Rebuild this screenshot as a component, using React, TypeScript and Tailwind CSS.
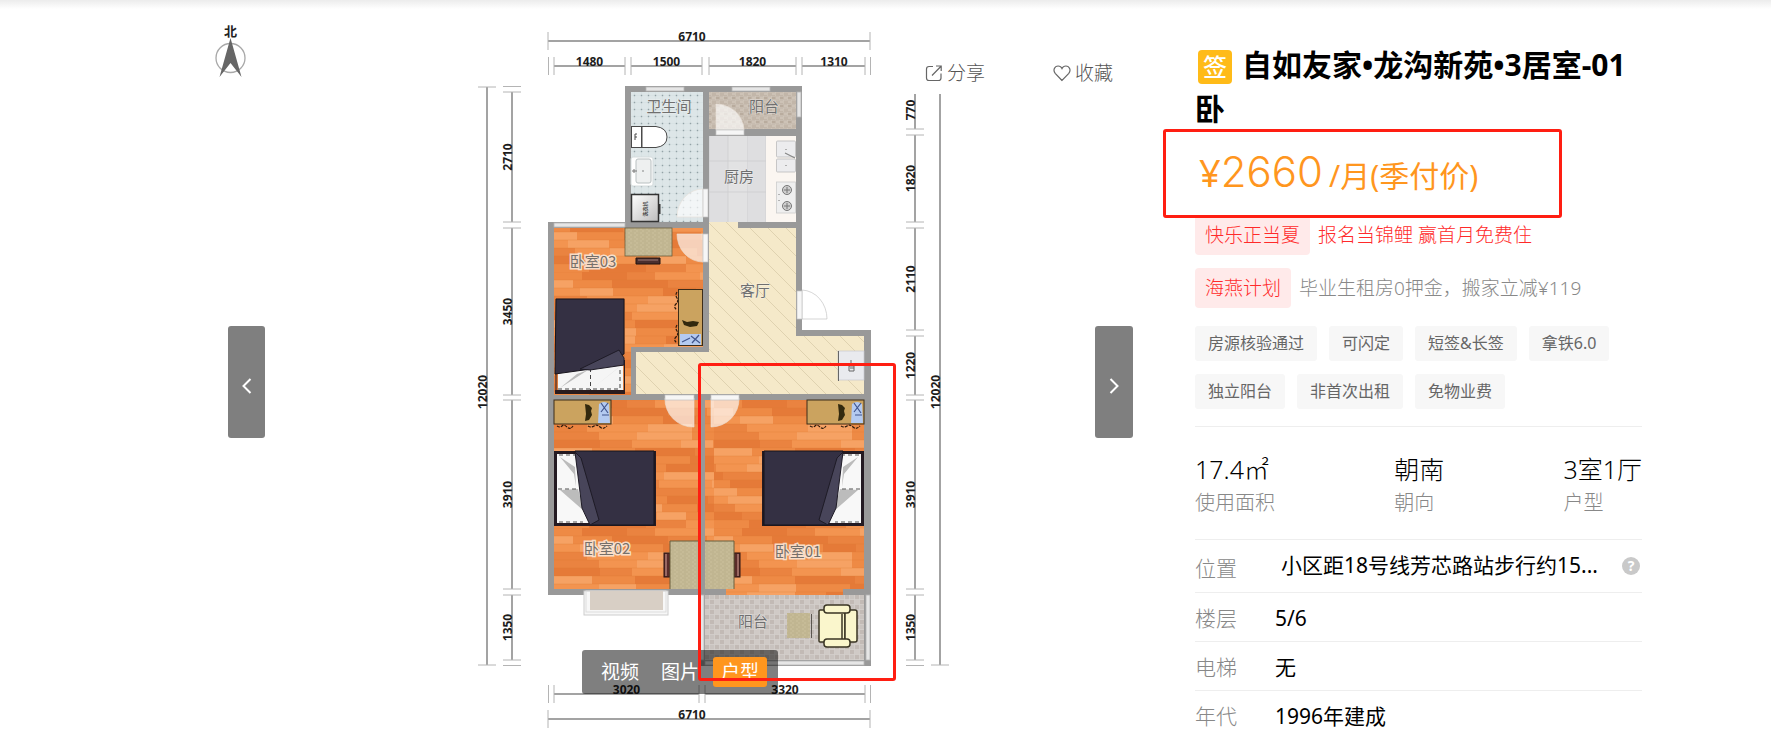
import React from "react";

const WOOD = ["#ee8a45", "#f39450", "#e57a38", "#f6a264", "#ea8340"];

const tags = ["房源核验通过", "可闪定", "短签&长签", "拿铁6.0", "独立阳台", "非首次出租", "免物业费"];

const stats = [
  { value: "17.4㎡", label: "使用面积" },
  { value: "朝南", label: "朝向" },
  { value: "3室1厅", label: "户型" },
];

const DIM_FONT = "font-['Noto_Sans','Noto_Sans_CJK_SC',sans-serif] font-bold text-[12px]";

type DimProps = { from: number; to: number; at: number; label: string; labelAt?: number; ticks?: boolean };

function HDim({ from, to, at, label, labelAt }: DimProps) {
  return (
    <g>
      <path d={`M${from} ${at}H${to}`} stroke="#858585" strokeWidth="1.5" />
      <path d={`M${from} ${at - 9}v18M${to} ${at - 9}v18`} stroke="#b4b4b4" />
      <text x={labelAt ?? (from + to) / 2} y={at} textAnchor="middle" fill="#1c1c1c" className={DIM_FONT}>
        {label}
      </text>
    </g>
  );
}

function VDim({ from, to, at, label, labelAt, ticks = true }: DimProps) {
  const mid = labelAt ?? (from + to) / 2;
  return (
    <g>
      <path d={`M${at} ${from}V${to}`} stroke="#858585" strokeWidth="1.5" />
      <path d={`${ticks ? `M${at - 9} ${from}h18` : ""}M${at - 9} ${to}h18`} stroke="#b4b4b4" />
      <text
        transform={`translate(${at} ${mid}) rotate(-90)`}
        textAnchor="middle"
        fill="#1c1c1c"
        className={DIM_FONT}
      >
        {label}
      </text>
    </g>
  );
}

function RoomName({ x, y, children, halo }: { x: number; y: number; children: string; halo?: boolean }) {
  return (
    <text
      x={x}
      y={y}
      textAnchor="middle"
      fill={halo ? "#76706a" : "#6f6f6f"}
      stroke={halo ? "#fbf3ea" : "#f6f6f6"}
      strokeWidth={halo ? 3 : 1}
      strokeOpacity={halo ? 0.8 : 0.6}
      paintOrder="stroke"
      className="font-['Noto_Sans_CJK_SC',sans-serif] text-[15px]"
    >
      {children}
    </text>
  );
}

function Dresser() {
  return (
    <g>
      <path d="M3 26q3 2 5 0t5 1 6-1M34 26q3 2 6 0t6 1 7-1" fill="none" stroke="#2d1a0c" strokeWidth="1.2" strokeDasharray="3 1" />
      <rect width="57" height="24" fill="#cba35f" stroke="#3d2c18" />
      <path d="M31 4l4 1 3 3-1 3 1 4-3 5-4 1 1-7z" fill="#33290e" />
      <path d="M45 4q5-4 10 0l1 19H44z" fill="#b4caf0" />
      <path d="M47 3l7 10M54 3l-7 9M48 15h7" stroke="#41558c" strokeWidth="1.2" fill="none" />
    </g>
  );
}

function Bed() {
  return (
    <g>
      <rect width="102" height="75" fill="#241a22" />
      <rect x="3" y="3" width="34" height="69" fill="#f8f8f8" />
      <path d="M6 6l14 17 2 13-1-20zM6 39l24 21-6-22z" fill="#bcbcbc" />
      <path d="M5 4h16M4 38h18M5 71h24" stroke="#555" strokeWidth="1" strokeDasharray="4 3" fill="none" />
      <path d="M21 0H100V74H36z" fill="#343043" stroke="#17141c" />
      <path d="M21 1l6 6 18 62-9 5-8-17z" fill="#48455a" stroke="#1e1b26" />
    </g>
  );
}

function WorkDesk() {
  return (
    <g>
      <rect x="-6" y="12" width="6" height="24" fill="#5a2c2a" stroke="#2b1412" />
      <path d="M-4 13v22" stroke="#d9a59a" strokeWidth="1" />
      <rect width="29" height="48" fill="url(#desk)" />
      <path d="M0 48V0h29" fill="none" stroke="#6b5f3d" />
    </g>
  );
}

function FloorPlan() {
  const planks: React.ReactNode[] = [];
  for (let row = 0; row < 16; row++) {
    let x = -((row * 37) % 50);
    let i = row * 3;
    while (x < 160) {
      const w = 28 + ((i * 17 + row * 11) % 34);
      planks.push(
        <rect key={`${row}-${x}`} x={x} y={row * 8} width={w} height="8" fill={WOOD[(i * 7 + row * 2) % 5]} />
      );
      x += w;
      i++;
    }
    planks.push(<path key={`l${row}`} d={`M0 ${row * 8}h160`} stroke="#d9752f" strokeWidth="0.6" opacity="0.5" />);
  }
  const glass = "#e6e6e6";
  return (
    <svg viewBox="200 0 933 733" className="block h-auto w-full" role="img" aria-label="户型图">
      <defs>
        <pattern id="wood" x="554" y="400" width="160" height="128" patternUnits="userSpaceOnUse">
          {planks}
        </pattern>
        <pattern id="dots" x="631" y="92" width="7" height="7" patternUnits="userSpaceOnUse">
          <rect width="7" height="7" fill="#dde6e8" />
          <path d="M0 3.500h7M3.500 0v7" stroke="#d2dee0" strokeWidth="0.500" />
          <rect x="2.800" y="2.800" width="1.400" height="1.400" fill="#93a2a7" />
        </pattern>
        <pattern id="mosaic" width="8" height="8" patternUnits="userSpaceOnUse">
          <rect width="8" height="8" fill="#c2b6a9" />
          <path d="M0 1h3v2H0zM4 5h3v2H4z" fill="#cdc2b6" />
          <path d="M4 1h3v2H4z" fill="#b9ac9e" />
          <path d="M0 4h8M0 0h8M3.500 0v4M7.500 4v4" stroke="#d3c9bd" strokeWidth="0.600" />
        </pattern>
        <pattern id="stone" width="10" height="10" patternUnits="userSpaceOnUse">
          <rect width="10" height="10" fill="#c9c3bf" />
          <path d="M0 0h4v4H0zM5 5h4v4H5z" fill="#c2bab5" />
          <path d="M5 0h4v4H5z" fill="#d0cac6" />
          <path d="M0 4.500h10M4.500 0v10M9.500 0v10M0 9.500h10" stroke="#d7d2ce" strokeWidth="0.600" />
        </pattern>
        <pattern id="tile" x="709" y="127" width="38" height="31" patternUnits="userSpaceOnUse">
          <rect width="38" height="31" fill="#e2e2e3" />
          <rect width="19" height="31" fill="#dedee0" />
          <path d="M0 3h38M19 0v31M0 0v31" stroke="#cdcdcf" strokeWidth="0.800" />
        </pattern>
        <pattern id="marble" width="18" height="18" patternUnits="userSpaceOnUse">
          <rect width="18" height="18" fill="#f5e9c9" />
          <path d="M-1-1l20 20" stroke="#dccfae" strokeWidth="0.900" />
        </pattern>
        <pattern id="desk" width="6" height="4" patternUnits="userSpaceOnUse">
          <rect width="6" height="4" fill="#c6bb97" />
          <path d="M0 1h4M2 3h4" stroke="#b8ad88" strokeWidth="0.800" />
        </pattern>
        <linearGradient id="steel" x1="0" y1="0" x2="1" y2="1">
          <stop offset="0" stopColor="#ffffff" />
          <stop offset="1" stopColor="#bdbdbd" />
        </linearGradient>
      </defs>

      <g>
        <circle cx="230.500" cy="58" r="14.500" fill="none" stroke="#a8a8a8" strokeWidth="1.300" />
        <path d="M230.500 38l11 39-11-14-11 14z" fill="#666" />
        <text x="230.500" y="36" textAnchor="middle" fill="#222" className="font-['Noto_Sans_CJK_SC',sans-serif] text-[13px] font-bold">
          北
        </text>
      </g>

      <HDim from={548} to={870} at={41} label="6710" labelAt={692} />
      <HDim from={554} to={625} at={66} label="1480" />
      <HDim from={631} to={702} at={66} label="1500" />
      <HDim from={709} to={796} at={66} label="1820" />
      <HDim from={802} to={865} at={66} label="1310" labelAt={834} />
      <path d="M548.500 57v18M870.500 57v18M548.500 685v18M870.500 685v18" stroke="#b4b4b4" />
      <HDim from={554} to={699} at={694} label="3020" />
      <HDim from={705} to={865} at={694} label="3320" />
      <HDim from={548} to={870} at={719} label="6710" labelAt={692} />

      <VDim from={87} to={665} at={487} label="12020" labelAt={392} />
      <path d="M503 86.500h18M503 665.500h18M906 665.500h18" stroke="#b4b4b4" />
      <VDim from={92} to={222} at={512} label="2710" />
      <VDim from={228} to={395} at={512} label="3450" />
      <VDim from={400} to={589} at={512} label="3910" />
      <VDim from={595} to={660} at={512} label="1350" />
      <VDim from={94} to={129} at={915} label="770" labelAt={110} ticks={false} />
      <VDim from={135} to={222} at={915} label="1820" />
      <VDim from={228} to={330} at={915} label="2110" />
      <VDim from={336} to={395} at={915} label="1220" />
      <VDim from={400} to={589} at={915} label="3910" />
      <VDim from={595} to={660} at={915} label="1350" />
      <VDim from={94} to={665} at={940} label="12020" labelAt={392} ticks={false} />

      <path d="M625 86H802V330H871V666H699V595H548V222H625z" fill="#999999" />

      <rect x="631" y="92" width="72" height="130" fill="url(#dots)" />
      <rect x="709" y="92" width="87" height="37" fill="url(#mosaic)" />
      <rect x="709" y="136" width="87" height="86" fill="url(#tile)" />
      <path d="M554 228H703V347H631V395H554z" fill="url(#wood)" />
      <path d="M709 222H738V228H796V336H864V394H636V352H709z" fill="url(#marble)" />
      <rect x="554" y="400" width="145" height="189" fill="url(#wood)" />
      <path d="M705 400H864V589H843V595H726V589H705z" fill="url(#wood)" />
      <rect x="705" y="595" width="159" height="65" fill="url(#stone)" />

      <g fill={glass} stroke="#b5b5b5" strokeWidth="0.800">
        <rect x="646" y="87" width="38" height="4" />
        <rect x="732" y="87" width="38" height="4" />
        <rect x="797" y="92" width="4" height="25" />
        <rect x="554" y="223" width="71" height="4" />
        <rect x="700" y="595" width="4" height="65" />
        <rect x="866" y="595" width="4" height="65" />
        <rect x="705" y="661" width="159" height="4" />
      </g>
      <g>
        <rect x="584" y="591" width="84" height="24" fill="#f7f7f7" stroke="#cdcdcd" />
        <rect x="586" y="591" width="80" height="21" fill="none" stroke="#dddddd" />
        <rect x="590" y="591" width="73" height="19" fill="#d8cfc5" />
      </g>

      <g fill="#ffffff" fillOpacity="0.650" stroke="#e9e0d8" strokeWidth="0.600">
        <path d="M716 130V104A28 27 0 0 1 744 130z" />
        <path d="M703 217H677A26 28 0 0 1 703 189z" />
        <path d="M703 234H677A26 28 0 0 0 703 262z" />
        <path d="M694 398H665A28 28 0 0 0 694 427z" />
        <path d="M711 398H739A28 28 0 0 1 711 427z" />
        <path d="M802 319V290A26 29 0 0 1 827 319z" stroke="#bbbbbb" />
      </g>
      <g fill="#f6f6f6" stroke="#c4c4c4" strokeWidth="0.700">
        <rect x="716" y="130" width="28" height="5" />
        <rect x="703" y="189" width="5" height="28" />
        <rect x="703" y="234" width="5" height="28" />
        <rect x="797" y="291" width="5" height="28" />
        <rect x="665" y="395" width="29" height="5" />
        <rect x="711" y="395" width="28" height="5" />
      </g>

      <g stroke="#4a4a4a" fill="#ffffff">
        <path d="M642 126.500H656Q667 128 667 137Q667 146 656 147.500H642z" />
        <rect x="631.500" y="126.500" width="10" height="21" />
        <path d="M635 134h2M635 134v6M635 137h2" fill="none" />
      </g>
      <rect x="631" y="157" width="22" height="29" rx="2" fill="#fff" stroke="#d5dcdd" />
      <rect x="636" y="159" width="15" height="24" rx="2" fill="#eef0f0" stroke="#b9c0c1" />
      <path d="M632 171h5M634 169v4" stroke="#777" />
      <circle cx="643" cy="171" r="0.800" fill="#777" />
      <rect x="631.500" y="194.500" width="27" height="27" fill="url(#steel)" stroke="#333" strokeWidth="1.500" />
      <path d="M659.500 204v10" stroke="#333" strokeWidth="2" />
      <text
        transform="translate(647 209) rotate(-90)"
        textAnchor="middle"
        fill="#444"
        className="font-['Noto_Sans_CJK_SC',sans-serif] text-[5px] font-bold"
      >
        洗衣机
      </text>

      <path d="M766 136H796V222H766z" fill="#fbf6f1" />
      <rect x="776.500" y="141" width="19" height="16" rx="1" fill="#ececee" stroke="#bbb" strokeWidth="0.800" />
      <rect x="776.500" y="159" width="19" height="13" rx="1" fill="#ececee" stroke="#bbb" strokeWidth="0.800" />
      <path d="M785 153l10 5M786 149v1M786 165v1" stroke="#888" strokeWidth="1.200" />
      <rect x="776.500" y="182" width="19" height="31" fill="#efefef" stroke="#ccc" strokeWidth="0.800" />
      <g fill="#cfcfcf" stroke="#777" strokeWidth="1">
        <circle cx="787" cy="190" r="4.500" />
        <circle cx="787" cy="206" r="4.500" />
        <path d="M787 187v6M784 190h6M787 203v6M784 206h6" />
        <path d="M779 194v1M779 200v1" />
      </g>

      <rect x="625" y="228" width="47" height="28" fill="url(#desk)" stroke="#6b5f3d" strokeWidth="0.800" />
      <path d="M636 258h24v6h-24z" fill="#4a2f2f" stroke="#21120f" />
      <path d="M638 260h20" stroke="#9b7b78" />
      <path d="M677 292q-2 3 0 6t-1 6 1 6M677 325q-2 3 0 6t-1 6 1 6" fill="none" stroke="#2d1a0c" strokeWidth="1.200" strokeDasharray="3 1" />
      <g>
        <rect x="678.500" y="289.500" width="24" height="56" fill="#cba35f" stroke="#3d2c18" />
        <path d="M682 320l5 2 6-1 6 1-2 4-7 1-6-2z" fill="#33290e" />
        <path d="M680 334h21v11h-21z" fill="#b4caf0" />
        <path d="M691 336l9 7M699 335l-7 8M682 342l8-4" stroke="#41558c" strokeWidth="1.200" />
      </g>
      <g>
        <path d="M555 298H625V394H555z" fill="#d97a3c" />
        <path d="M555 390H625V394H555z" fill="#2a1b1e" />
        <path d="M556 370V392M624.500 360V392" stroke="#2a1b1e" />
        <rect x="558" y="366" width="65" height="24" fill="#f5f5f5" />
        <path d="M560 388l17-14 11-4zM593 388l25-20 4-3z" fill="#bbb" />
        <path d="M590.500 368v22M558 389h62v-22" fill="none" stroke="#444" strokeDasharray="4 3" />
        <path d="M556 299H624V354L591 369L555 374z" fill="#343043" stroke="#17141c" />
        <path d="M580 369L619 350L624 358V365L590 370z" fill="#48455a" stroke="#1e1b26" />
      </g>

      <g transform="translate(554 400)"><Dresser /></g>
      <g transform="translate(807 400)"><Dresser /></g>
      <g transform="translate(554 451)"><Bed /></g>
      <g transform="translate(864 451) scale(-1 1)"><Bed /></g>
      <g transform="translate(670 541)"><WorkDesk /></g>
      <g transform="translate(734 541) scale(-1 1)"><WorkDesk /></g>

      <rect x="838" y="351" width="26" height="29" fill="#e9eaee" stroke="#c9c9cf" strokeWidth="0.700" />
      <path d="M838.500 351v30M851 360v4M849 366h5v5h-5zM850 368h4" fill="none" stroke="#666" />
      <rect x="787" y="613" width="23" height="25" fill="url(#desk)" />
      <path d="M811.500 614v24" stroke="#5b5650" />
      <g fill="#faf6cc" stroke="#3a3523" strokeWidth="1.500">
        <rect x="819" y="610" width="26" height="32" rx="1" />
        <rect x="845" y="610" width="12" height="32" rx="2" />
        <rect x="824" y="605" width="26" height="8" rx="3" />
        <rect x="824" y="639" width="26" height="8" rx="3" />
        <path d="M842 614v25" />
      </g>

      <RoomName x={669} y={112}>卫生间</RoomName>
      <RoomName x={764} y={112}>阳台</RoomName>
      <RoomName x={739} y={182}>厨房</RoomName>
      <RoomName x={755} y={296}>客厅</RoomName>
      <RoomName x={593} y={267} halo>卧室03</RoomName>
      <RoomName x={607} y={554} halo>卧室02</RoomName>
      <RoomName x={798} y={557} halo>卧室01</RoomName>
      <RoomName x={753} y={627}>阳台</RoomName>
    </svg>
  );
}

function Arrow({ d }: { d: string }) {
  return (
    <svg viewBox="0 0 10 16" className="mt-2 h-4 w-[10px]" fill="none" stroke="#fff" strokeWidth="2" aria-hidden="true">
      <path d={d} />
    </svg>
  );
}

function Gallery() {
  return (
    <section className="relative min-w-0 flex-1" aria-label="房源图片">
      <FloorPlan />

      <button
        type="button"
        aria-label="上一张"
        className="absolute left-[28px] top-[326px] flex h-[112px] w-[37px] items-center justify-center rounded-[3px] bg-black/50"
      >
        <Arrow d="M8.500 1L1.500 8l7 7" />
      </button>
      <button
        type="button"
        aria-label="下一张"
        className="absolute right-0 top-[326px] flex h-[112px] w-[38px] items-center justify-center rounded-[3px] bg-black/50"
      >
        <Arrow d="M1.500 1l7 7-7 7" />
      </button>

      <div className="absolute right-0 top-[52px] flex h-[42px] w-[224px] items-center gap-[68px] bg-white pl-4 text-[19px] font-light leading-6 text-[#555]">
        <button type="button" className="flex items-center gap-1">
          <svg viewBox="0 0 18 18" className="h-[18px] w-[18px]" fill="none" stroke="#666" strokeWidth="1.200" aria-hidden="true">
            <path d="M8 2.500H4Q1.500 2.500 1.500 5v9q0 2.500 2.500 2.500h9.500q2.500 0 2.500-2.500V9.500M7 11.500L15.800 2.500M11 2h5.200v5" />
          </svg>
          分享
        </button>
        <button type="button" className="flex items-center gap-1">
          <svg viewBox="0 0 18 18" className="h-[18px] w-[18px]" fill="none" stroke="#666" strokeWidth="1.200" aria-hidden="true">
            <path d="M9 16.500L2.200 9.300C-.3 6.300 1.500 2 5.100 2 7 2 8.300 3 9 4.500 9.700 3 11 2 12.900 2c3.600 0 5.400 4.300 2.900 7.300z" />
          </svg>
          收藏
        </button>
      </div>

      <div className="absolute left-[382px] top-[650px] flex items-center gap-[6px] rounded-[3px] bg-black/50 px-[11px] py-[7px] text-[19px] leading-[30px] text-white">
        <button type="button" className="px-2">视频</button>
        <button type="button" className="px-2">图片</button>
        <button type="button" aria-pressed="true" className="rounded-[3px] bg-[#ff961e] px-2">户型</button>
      </div>

      <div className="pointer-events-none absolute left-[498px] top-[363px] h-[318px] w-[198px] rounded-[3px] border-3 border-[#ff1e12]" />
    </section>
  );
}

function Details() {
  return (
    <aside className="flex w-[447px] shrink-0 flex-col pt-[43px]">
      <h1 className="text-[30px] font-bold leading-[44px] text-black">
        <span className="ml-[3px] mr-[10px] inline-flex h-[34px] w-[34px] items-center justify-center rounded-[4px] bg-[#ffbb18] align-baseline text-[24px] leading-none font-medium text-white">
          签
        </span>
        自如友家•龙沟新苑•3居室-01卧
      </h1>

      <div className="relative mt-[2px] flex h-[82px] items-center pb-1 pl-1 text-[#ff961e]">
        <p className="flex items-baseline">
          <span className="text-[38px] leading-none">¥</span>
          <span className="font-['Inter',sans-serif] text-[42px] font-light leading-none">2660</span>
          <span className="ml-[6px] text-[30px] leading-none">/月(季付价)</span>
        </p>
        <div className="pointer-events-none absolute -left-8 -top-1 h-[89px] w-[399px] rounded-[3px] border-3 border-[#ff1e12]" />
      </div>

      <div className="flex flex-col gap-[13px] text-[19px] font-light leading-[40px] text-[#ff2a2a]">
        <div className="flex items-center gap-2">
          <span className="rounded-[4px] bg-[#ffeaea] px-[10px]">快乐正当夏</span>
          <a href="#promo">报名当锦鲤 赢首月免费住</a>
        </div>
        <div className="flex items-center gap-2">
          <span className="rounded-[4px] bg-[#ffeaea] px-[10px]">海燕计划</span>
          <a href="#graduate" className="text-[#888]">毕业生租房0押金，搬家立减¥119</a>
        </div>
      </div>

      <ul className="mt-[18px] flex flex-wrap gap-x-3 gap-y-[13px] text-[16px] leading-[35px] text-[#666]">
        {tags.map((tag) => (
          <li key={tag} className="rounded-[3px] bg-[#f7f7f7] px-[13px]">
            {tag}
          </li>
        ))}
      </ul>

      <dl className="mt-[17px] flex justify-between border-y border-[#eeeeee] pb-[19px] pt-[25px] leading-[34px]">
        {stats.map((stat) => (
          <div key={stat.label} className="flex flex-col-reverse">
            <dt className="text-[20px] font-light text-[#888]">{stat.label}</dt>
            <dd className="text-[25px] font-light text-black">{stat.value}</dd>
          </div>
        ))}
      </dl>

      <dl className="text-[21px] text-black">
        <div className="flex h-[53px] items-center border-b border-[#eeeeee]">
          <dt className="w-[86px] pt-[6px] font-light text-[#888]">位置</dt>
          <dd className="flex flex-1 items-center justify-between pr-[2px]">
            <span>小区距18号线芳芯路站步行约15...</span>
            <button
              type="button"
              aria-label="位置说明"
              className="flex h-[18px] w-[18px] items-center justify-center rounded-full bg-[#c9c9c9] text-[14px] font-bold leading-none text-white"
            >
              ?
            </button>
          </dd>
        </div>
        <div className="flex h-[49px] items-center border-b border-[#eeeeee] pt-1">
          <dt className="w-[80px] font-light text-[#888]">楼层</dt>
          <dd>5/6</dd>
        </div>
        <div className="flex h-[49px] items-center border-b border-[#eeeeee] pt-1">
          <dt className="w-[80px] font-light text-[#888]">电梯</dt>
          <dd>无</dd>
        </div>
        <div className="flex items-center pt-[10px] leading-[30px]">
          <dt className="w-[80px] font-light text-[#888]">年代</dt>
          <dd>1996年建成</dd>
        </div>
      </dl>
    </aside>
  );
}

export default function App() {
  return (
    <div className="relative bg-white font-['Noto_Sans','Noto_Sans_CJK_SC',sans-serif]">
      <div className="absolute inset-x-0 top-0 z-10 h-[9px] bg-linear-to-b from-[#ececec] to-white" />
      <main className="flex items-start gap-[62px] pl-[200px] pr-[129px]">
        <Gallery />
        <Details />
      </main>
    </div>
  );
}
